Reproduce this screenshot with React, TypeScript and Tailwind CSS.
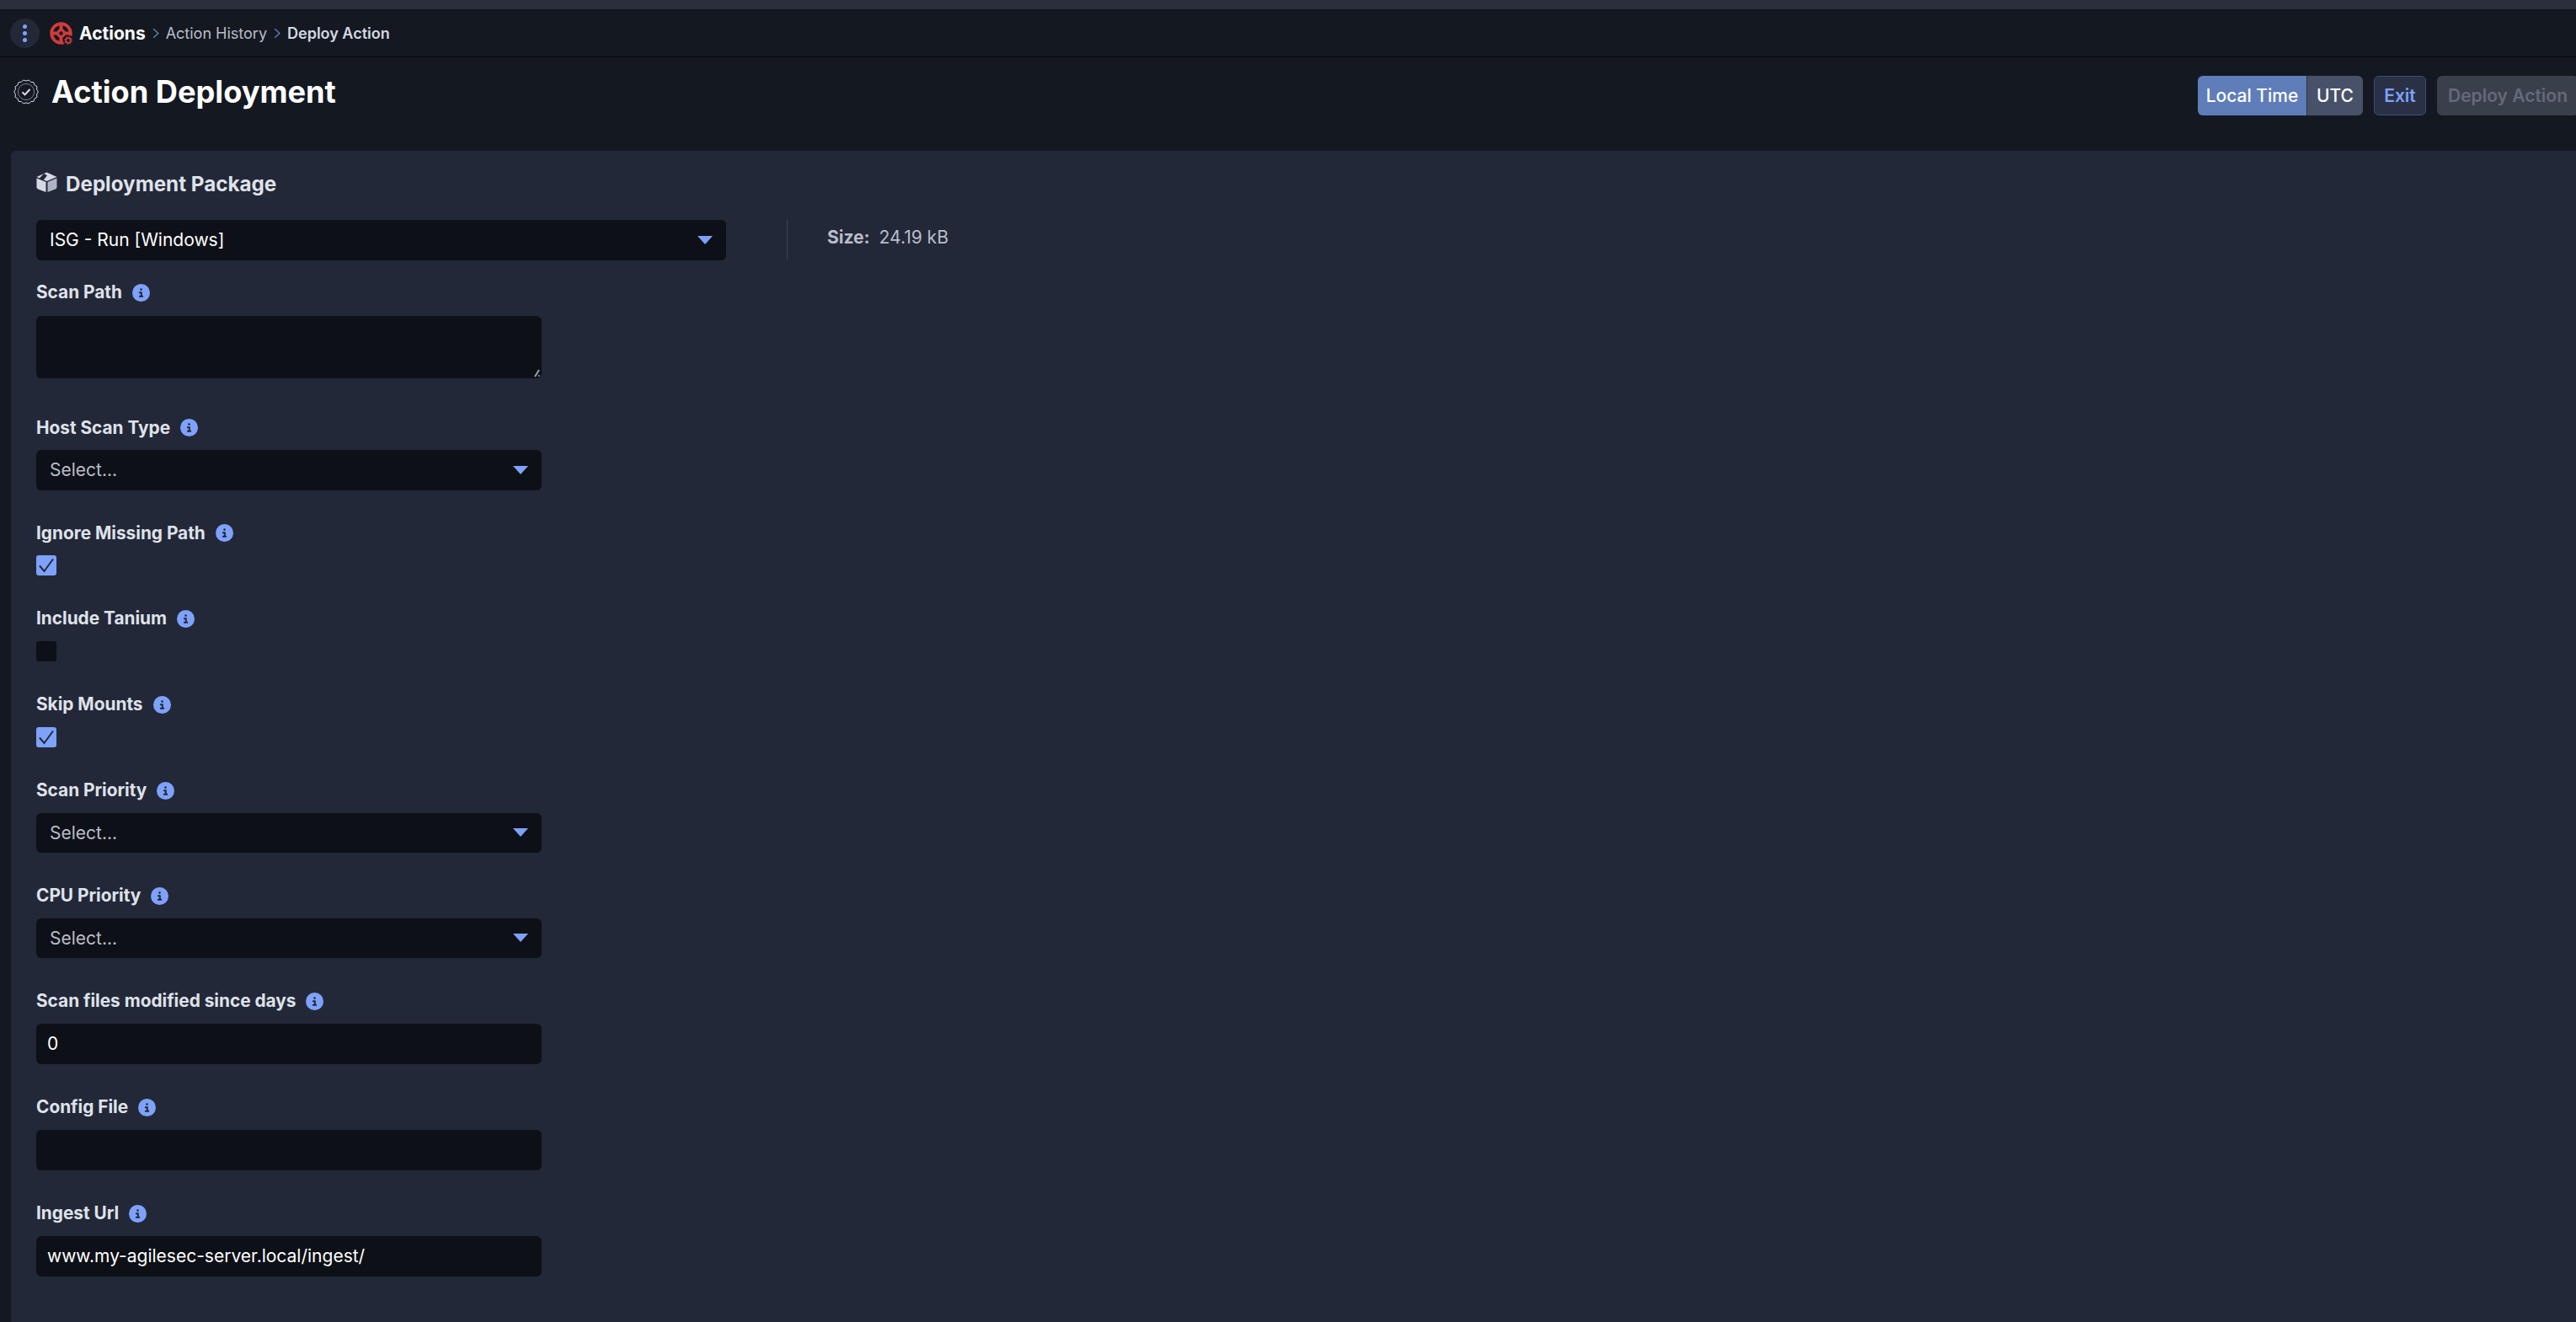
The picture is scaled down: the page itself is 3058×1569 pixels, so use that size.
import React from 'react';
import { FaCircleInfo } from 'react-icons/fa6';

// scalloped outline of the verified badge
const badgePoints = Array.from({ length: 28 }, (_, i) => {
  const r = i % 2 === 0 ? 14.4 : 12.9;
  const a = (i / 28) * Math.PI * 2;
  return `${(15 + r * Math.cos(a)).toFixed(2)},${(15 + r * Math.sin(a)).toFixed(2)}`;
}).join(' ');

const LogoIcon = () => (
  <svg viewBox="0 0 28 28" className="w-[28px] h-[28px] shrink-0">
    <circle cx="13.5" cy="13.5" r="11.3" fill="none" stroke="#cf3c3c" strokeWidth="3.8" />
    <path d="M13.5 2v23M2 13.5h23" stroke="#cf3c3c" strokeWidth="4" />
    <circle cx="13.5" cy="13.5" r="5.4" fill="#cf3c3c" />
    <circle cx="13.5" cy="13.5" r="2.2" fill="#141821" />
    <circle cx="22" cy="22" r="6.2" fill="#141821" />
    <circle cx="22" cy="22" r="2.8" fill="none" stroke="#cf3c3c" strokeWidth="1.8" />
    <circle cx="22" cy="22" r="4.2" fill="none" stroke="#cf3c3c" strokeWidth="1.4" strokeDasharray="1.5 1.8" />
  </svg>
);

const BadgeIcon = () => (
  <svg viewBox="0 0 30 30" className="w-[30px] h-[30px] shrink-0" fill="none">
    <polygon points={badgePoints} stroke="#d5d9e4" strokeWidth="1" strokeLinejoin="round" />
    <circle cx="15" cy="15" r="9.6" stroke="#7b8090" strokeWidth="1" />
    <path d="M10.5 15.4l3 3 6-6.4" stroke="#e5e7ee" strokeWidth="1.9" />
  </svg>
);

const BoxIcon = () => (
  <svg viewBox="0 0 25 24" className="w-[25px] h-[24px] shrink-0 -mt-[6px]">
    <path d="M12.5 0.5L24.5 6L12.5 11L0.5 6Z" fill="#d5d9e4" />
    <path d="M9 2.1L13 4.2L7.2 11.5L3.5 8Z" fill="#232838" />
    <path d="M0.5 7.5L11.5 12V24L2.2 20.4C1.2 20 0.5 19.1 0.5 18Z" fill="#d5d9e4" />
    <path d="M13.5 12L24.5 7.5V18C24.5 19.1 23.8 20 22.8 20.4L13.5 24Z" fill="#aeb4c4" />
  </svg>
);

const Chevron = () => (
  <svg viewBox="0 0 10 16" className="w-[8px] h-[13px] shrink-0" fill="none">
    <path d="M1.5 1.5L8.5 8L1.5 14.5" stroke="#5f7db8" strokeWidth="1.8" />
  </svg>
);

const Caret = () => (
  <svg viewBox="0 0 18 10" className="w-[18px] h-[10px] shrink-0">
    <path d="M0 0H18L9 10Z" fill="#7ea2fa" />
  </svg>
);

const Label = ({ text }: { text: string }) => (
  <div className="flex items-center gap-[12px] h-[25px] pt-[1px] mb-[14.5px] text-[20.8px] leading-[24px] font-bold text-[#dfe2ea]">
    <span>{text}</span>
    <FaCircleInfo className="w-[21px] h-[21px] text-[#7ea2fa]" />
  </div>
);

const Select = ({ value, wide }: { value: string; wide?: boolean }) => (
  <div className={`flex items-center justify-between h-[47.5px] pl-[16px] pr-[16px] rounded-[6px] bg-[#0d1017] text-[21px] ${wide ? 'w-[819px] text-white' : 'w-[600px] text-[#b9bdc9]'}`}>
    <span>{value}</span>
    <Caret />
  </div>
);

const SelectField = ({ label }: { label: string }) => (
  <div className="mb-[38px]">
    <Label text={label} />
    <Select value="Select..." />
  </div>
);

const Check = ({ label, checked }: { label: string; checked?: boolean }) => (
  <div className="mb-[38.4px]">
    <Label text={label} />
    {checked ? (
      <div className="w-[24px] h-[24px] rounded-[3px] bg-[#7ea2fa] flex items-center justify-center">
        <svg viewBox="0 0 24 24" className="w-[24px] h-[24px]" fill="none">
          <path d="M4 12.5l5.5 6.5L20 4.5" stroke="#232838" strokeWidth="2" />
        </svg>
      </div>
    ) : (
      <div className="w-[24px] h-[24px] rounded-[3px] bg-[#0d1017]" />
    )}
  </div>
);

const TextField = ({ label, value }: { label: string; value: string }) => (
  <div className="mb-[38.5px]">
    <Label text={label} />
    <input
      readOnly
      value={value}
      className="block w-[600px] h-[48px] px-[13px] rounded-[6px] bg-[#0d1017] text-[21px] text-white outline-none"
    />
  </div>
);

export default function App() {
  return (
    <div className="h-[1569px] w-full overflow-hidden bg-[#141821] font-['Inter',sans-serif]">
      <div className="h-[11px] bg-[#2b2e3b] border-b border-[#10131a] box-content" />

      {/* breadcrumb bar */}
      <div className="h-[55px] flex items-center pl-[12px] border-b border-[#05070a] box-content">
        <button className="w-[35px] h-[35px] rounded-full bg-[#232838] flex flex-col items-center justify-center gap-[3px]">
          <span className="w-[5px] h-[5px] rounded-full bg-[#7ea2fa]" />
          <span className="w-[5px] h-[5px] rounded-full bg-[#7ea2fa]" />
          <span className="w-[5px] h-[5px] rounded-full bg-[#7ea2fa]" />
        </button>
        <div className="ml-[12px]"><LogoIcon /></div>
        <span className="ml-[7px] text-[21px] font-bold text-white">Actions</span>
        <div className="mx-[8px]"><Chevron /></div>
        <span className="text-[18px] text-[#b9bdc9]">Action History</span>
        <div className="mx-[8px]"><Chevron /></div>
        <span className="text-[18px] font-semibold text-[#d5d9e4]">Deploy Action</span>
      </div>

      {/* page header */}
      <div className="h-[111px] flex items-start justify-between">
        <div className="flex items-center pl-[16px] pt-[16px] gap-[15px]">
          <BadgeIcon />
          <h1 className="text-[36.2px] leading-[50px] font-bold text-white">Action Deployment</h1>
        </div>
        <div className="flex items-center pt-[22px] gap-[13px] text-[21px] shrink-0 -mr-[3px]">
          <div className="flex h-[47px] rounded-[6px] overflow-hidden text-white font-medium">
            <span className="w-[129px] flex items-center justify-center bg-[#5f7db8]">Local Time</span>
            <span className="w-[67px] flex items-center justify-center bg-[#475269] border-l border-[#2a3146]">UTC</span>
          </div>
          <button className="w-[62px] h-[47px] rounded-[6px] bg-[#2a3146] border border-[#3a4d78] text-[#7ea2fa] font-semibold">Exit</button>
          <button className="w-[168px] h-[47px] rounded-[6px] bg-[#3a3f4c] text-[#646a78] font-semibold">Deploy Action</button>
        </div>
      </div>

      {/* deployment package panel */}
      <div className="ml-[13px] h-[1400px] rounded-tl-[6px] bg-[#232838] pl-[30px] pt-[24px]">
        <div className="flex items-center gap-[10px] h-[32px] mb-[26px] text-[24.2px] font-bold text-[#dfe2ea]">
          <BoxIcon />
          <span>Deployment Package</span>
        </div>

        <div className="flex items-start mb-[25.5px]">
          <Select value="ISG - Run [Windows]" wide />
          <div className="w-px h-[47px] ml-[72px] bg-[#3d4559]" />
          <div className="ml-[47px] mt-[10px] text-[21px] leading-[22px] text-[#b9bdc9]">
            <span className="font-bold">Size:</span>
            <span className="ml-[11px]">24.19 kB</span>
          </div>
        </div>

        <div className="mb-[46px]">
          <Label text="Scan Path" />
          <div className="relative w-[600px] h-[74px] mt-[15.5px]">
            <textarea readOnly className="block w-full h-full rounded-[6px] bg-[#0d1017] outline-none resize-none" />
            <svg viewBox="0 0 12 12" className="absolute right-0 bottom-0 w-[12px] h-[12px]" fill="none">
              <path d="M4 10L9 2" stroke="#9aa0a8" strokeWidth="2" />
              <path d="M8 9h1.5" stroke="#9aa0a8" strokeWidth="2" />
            </svg>
          </div>
        </div>

        <SelectField label="Host Scan Type" />
        <Check label="Ignore Missing Path" checked />
        <Check label="Include Tanium" />
        <Check label="Skip Mounts" checked />
        <SelectField label="Scan Priority" />
        <SelectField label="CPU Priority" />
        <TextField label="Scan files modified since days" value="0" />
        <TextField label="Config File" value="" />
        <TextField label="Ingest Url" value="www.my-agilesec-server.local/ingest/" />
      </div>
    </div>
  );
}
